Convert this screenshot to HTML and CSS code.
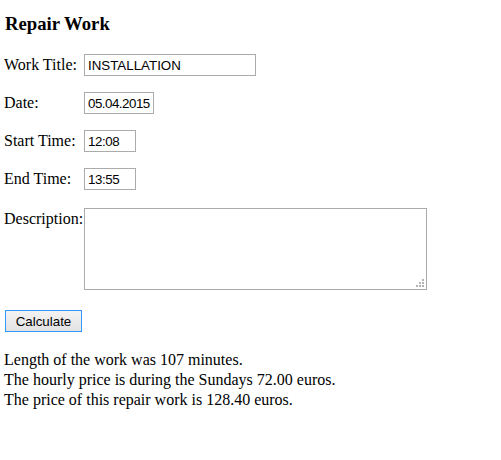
FILE: index.html
```html
<!DOCTYPE html>
<html>
<head>
<meta charset="utf-8">
<title>Repair Work</title>
<link rel="stylesheet" href="styles.css">
</head>
<body>
<div class="page">
  <h3 class="title">Repair Work</h3>
  <form class="form">
    <label class="lbl" for="wt">Work Title:</label>
    <input class="fld fld-title" id="wt" type="text" value="INSTALLATION">
    <label class="lbl" for="dt">Date:</label>
    <input class="fld fld-date" id="dt" type="text" value="05.04.2015">
    <label class="lbl" for="st">Start Time:</label>
    <input class="fld fld-time" id="st" type="text" value="12:08">
    <label class="lbl" for="et">End Time:</label>
    <input class="fld fld-time" id="et" type="text" value="13:55">
    <label class="lbl lbl-desc" for="ds">Description:</label>
    <div class="desc-wrap">
      <textarea class="desc" id="ds"></textarea>
      <svg class="grip" width="8" height="8" viewBox="0 0 8 8">
        <rect x="6" y="0" width="2" height="2" fill="#b4b4b4"/>
        <rect x="3" y="3" width="2" height="2" fill="#b4b4b4"/>
        <rect x="6" y="3" width="2" height="2" fill="#b4b4b4"/>
        <rect x="0" y="6" width="2" height="2" fill="#b4b4b4"/>
        <rect x="3" y="6" width="2" height="2" fill="#b4b4b4"/>
        <rect x="6" y="6" width="2" height="2" fill="#b4b4b4"/>
      </svg>
    </div>
  </form>
  <button class="btn" type="button">Calculate</button>
  <div class="result">
    <div>Length of the work was 107 minutes.</div>
    <div>The hourly price is during the Sundays 72.00 euros.</div>
    <div>The price of this repair work is 128.40 euros.</div>
  </div>
</div>
</body>
</html>
```
FILE: styles.css
```css
html, body {
  margin: 0;
  padding: 0;
  background: #ffffff;
}
.page {
  padding: 13px 4px 0 4px;
  font-family: "Liberation Serif", "Times New Roman", serif;
  font-size: 16px;
  color: #000000;
}
.title {
  margin: 0 0 20px 1px;
  font-size: 18.72px;
  font-weight: bold;
  line-height: 21px;
}
.form {
  display: grid;
  grid-template-columns: 80px auto;
  row-gap: 16px;
  align-items: baseline;
  justify-items: start;
  margin: 0;
}
.lbl {
  line-height: 18px;
}
.fld {
  box-sizing: border-box;
  height: 22px;
  margin: 0;
  padding: 1px 2px 1px 3px;
  border: 1px solid #ababab;
  font-family: "Liberation Sans", Arial, sans-serif;
  font-size: 13.33px;
  color: #000000;
  background: #ffffff;
  outline: none;
}
.fld-title { width: 172px; }
.fld-date {
  width: 70px;
  letter-spacing: -0.5px;
}
.fld-time {
  width: 52px;
  letter-spacing: -0.4px;
}
.lbl-desc {
  align-self: start;
  margin-top: 4px;
}
.desc-wrap {
  align-self: start;
  margin-top: 2px;
  position: relative;
  width: 343px;
  height: 82px;
}
.desc {
  display: block;
  box-sizing: border-box;
  width: 343px;
  height: 82px;
  margin: 0;
  border: 1px solid #ababab;
  resize: none;
  outline: none;
  font-family: "Liberation Sans", Arial, sans-serif;
  font-size: 13.33px;
}
.grip {
  position: absolute;
  right: 3px;
  bottom: 3px;
  display: block;
}
.btn {
  display: block;
  box-sizing: border-box;
  width: 77px;
  height: 22px;
  margin: 20px 0 0 1px;
  padding: 0;
  border: 1px solid #3399ff;
  background: linear-gradient(#f3f3f3, #e2e2e2);
  font-family: "Liberation Sans", Arial, sans-serif;
  font-size: 13.33px;
  color: #000000;
}
.result {
  margin-top: 18px;
  line-height: 20px;
}
```
